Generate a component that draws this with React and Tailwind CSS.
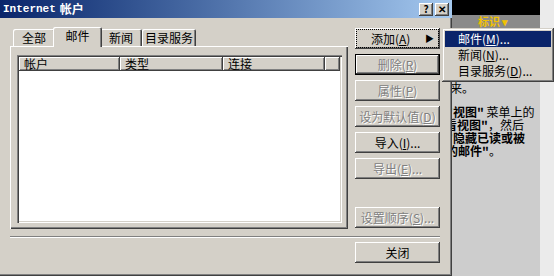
import React from "react";

const RAISED =
  "shadow-[inset_-1px_-1px_#404040,inset_1px_1px_#ffffff,inset_-2px_-2px_#808080,inset_2px_2px_#d4d0c8]";
const FONT = "font-['Noto_Sans_CJK_SC','Noto_Sans',sans-serif]";

function Btn({ children, disabled, def, pressed, className = "" }) {
  const text = disabled
    ? "text-[#808080] [text-shadow:1px_1px_#ffffff]"
    : "text-black";
  const frame = def
    ? "border border-black shadow-[inset_-1px_-1px_#404040,inset_1px_1px_#ffffff,inset_-2px_-2px_#808080]"
    : RAISED;
  return (
    <div
      className={`relative flex h-[21px] w-[85px] items-center justify-center bg-[#d4d0c8] text-[12px] leading-none ${frame} ${text} ${className}`}
    >
      {pressed && (
        <div className="absolute inset-[1px] border border-dotted border-black" />
      )}
      {children}
    </div>
  );
}

const U = ({ children }) => <span className="underline">{children}</span>;

function Tab({ label, active, w }) {
  return (
    <div
      className={`relative flex items-center justify-center rounded-t-[2px] bg-[#d4d0c8] text-[12px] leading-none shadow-[inset_1px_1px_#ffffff,inset_-1px_0_#404040,inset_-2px_0_#808080] ${
        active ? "z-10 -mx-[2px] h-[20px] -mb-px pb-[3px]" : "h-[17px]"
      } ${w}`}
    >
      {label}
    </div>
  );
}

function Header({ label, w }) {
  return (
    <div
      className={`flex h-[14px] items-center bg-[#d4d0c8] pl-[5px] text-[12px] leading-none shadow-[inset_-1px_-1px_#404040,inset_1px_1px_#ffffff,inset_-2px_-2px_#808080] ${w}`}
    >
      {label}
    </div>
  );
}

export default function App() {
  return (
    <div className={`relative flex h-[276px] w-[554px] overflow-hidden bg-[#d4d0c8] ${FONT}`}>
      {/* dialog */}
      <div className="flex h-full w-[452px] flex-col bg-[#d4d0c8] shadow-[inset_-1px_-1px_#404040,inset_-2px_-2px_#808080]">
        <div className="flex h-[18px] items-center justify-between bg-gradient-to-r from-[#0a246a] to-[#a6caf0] pl-[3px] pr-[3px]">
          <div className="flex items-center gap-[4px] text-[12px] font-bold leading-none text-white">
            <span className="font-['Liberation_Mono',monospace] text-[11px]">Internet</span>
            <span>帐户</span>
          </div>
          <div className="flex gap-[2px]">
            <div className={`flex h-[13px] w-[14px] items-center justify-center text-[10px] font-bold leading-none ${RAISED} bg-[#d4d0c8]`}>
              ?
            </div>
            <div className={`flex h-[13px] w-[14px] items-center justify-center text-[10px] font-bold leading-none ${RAISED} bg-[#d4d0c8]`}>
              ✕
            </div>
          </div>
        </div>

        <div className="flex pt-[8px]">
          {/* left: tabs + panel */}
          <div className="ml-[10px] w-[338px]">
            <div className="flex h-[20px] items-end pl-[3px]">
              <Tab label="全部" w="w-[42px]" />
              <Tab label="邮件" w="w-[49px]" active />
              <Tab label="新闻" w="w-[42px]" />
              <Tab label="目录服务" w="w-[54px]" />
            </div>
            <div className="h-[183px] pl-[7px] pr-[6px] pt-[9px] pb-[6px] shadow-[inset_1px_1px_#ffffff,inset_-1px_-1px_#404040,inset_-2px_-2px_#808080]">
              <div className="flex h-full flex-col bg-white p-[2px] shadow-[inset_1px_1px_#808080,inset_2px_2px_#404040,inset_-1px_-1px_#ffffff,inset_-2px_-2px_#d4d0c8]">
                <div className="flex">
                  <Header label="帐户" w="w-[101px]" />
                  <Header label="类型" w="w-[103px]" />
                  <Header label="连接" w="w-[102px]" />
                  <Header label="" w="flex-1" />
                </div>
              </div>
            </div>
          </div>

          {/* right: buttons */}
          <div className="ml-[7px] flex flex-col gap-[5px] pt-[2px]">
            <Btn pressed className="justify-start pl-[16px]">
              <span>
                添加(<U>A</U>)
              </span>
              <span className="absolute right-[6px] text-[9px]">▶</span>
            </Btn>
            <Btn disabled def>
              删除(<U>R</U>)
            </Btn>
            <Btn disabled>
              属性(<U>P</U>)
            </Btn>
            <Btn disabled>
              设为默认值(<U>D</U>)
            </Btn>
            <Btn>
              导入(<U>I</U>)...
            </Btn>
            <Btn disabled>
              导出(<U>E</U>)...
            </Btn>
            <Btn disabled className="mt-[23px]">
              设置顺序(<U>S</U>)...
            </Btn>
          </div>
        </div>

        <div className="ml-[10px] mr-[12px] mt-[7px] h-[2px] border-t border-b border-t-[#808080] border-b-white" />

        <div className="mt-[4px] flex justify-end pr-[12px]">
          <Btn>关闭</Btn>
        </div>
      </div>

      {/* background window */}
      <div className="flex h-full flex-1 flex-col">
        <div className="flex">
          <div className="h-[15px] w-[88px] bg-black" />
          <div className="flex-1 bg-[#ebebeb]" />
        </div>
        <div className="flex flex-1">
          <div className="flex w-[88px] flex-col bg-[#cdcdcd]">
            <div className="flex h-[13px] items-center bg-[#8a8a8a] pl-[26px] text-[11px] font-bold leading-none text-[#f2c200]">
              标识 ▾
            </div>
            <div className="overflow-hidden pt-[53px] text-[12px] leading-[13px] text-black">
              <div className="-ml-[2px] whitespace-nowrap">来。</div>
              <div className="mt-[11px] -ml-[6px] whitespace-nowrap">
                <b>"视图"</b> 菜单上的
              </div>
              <div className="-ml-[7px] whitespace-nowrap">
                <b>看视图"</b>，然后
              </div>
              <div className="-ml-[6px] whitespace-nowrap">
                <b>"隐藏已读或被</b>
              </div>
              <div className="-ml-[6px] whitespace-nowrap">
                <b>的邮件"</b>。
              </div>
            </div>
          </div>
          <div className="flex-1 bg-[#ebebeb]" />
        </div>
      </div>

      {/* popup menu */}
      <div className="absolute left-[442px] top-[28px] w-[112px] bg-[#d4d0c8] p-[3px] text-[12px] leading-none shadow-[inset_-1px_-1px_#404040,inset_1px_1px_#d4d0c8,inset_-2px_-2px_#808080,inset_2px_2px_#ffffff]">
        <div className="flex h-[16px] items-center bg-[#0a246a] pl-[13px] text-white">
          邮件(<U>M</U>)...
        </div>
        <div className="flex h-[16px] items-center pl-[13px]">
          新闻(<U>N</U>)...
        </div>
        <div className="flex h-[16px] items-center pl-[13px]">
          目录服务(<U>D</U>)...
        </div>
      </div>
    </div>
  );
}
